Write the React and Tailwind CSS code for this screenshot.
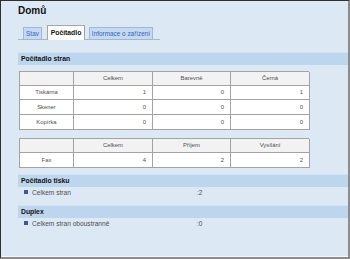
import { Fragment } from 'react';

const font = { fontFamily: '"Liberation Sans", Arial, sans-serif' };

const SectionBar = ({ title, className = '' }) => (
    <div className={`h-[13px] bg-[#bdd6ee] border-t border-[#d3e3f3] pl-[3px] flex items-center text-[6.8px] font-bold text-[#111] ${className}`}>
        {title}
    </div>
);

const Cell = ({ children, align = 'right', head = false, h }) => (
    <div
        className={`${h} border-r border-b border-[#a3a3a3] flex items-center text-[5.9px] text-[#505050] ${
            head ? 'bg-[#f2f2f2]' : 'bg-white'
        } ${align === 'center' ? 'justify-center' : 'justify-end pr-[6px]'}`}
    >
        {children}
    </div>
);

const CountTable = ({ heads, rows, className = '' }) => (
    <div className={`ml-[1px] w-[290px] border-l border-t border-[#a3a3a3] grid grid-cols-[54px_79px_78px_79px] ${className}`}>
        <Cell head align="center" h="h-[14px]" />
        {heads.map((t) => (
            <Cell key={t} head align="center" h="h-[14px]">{t}</Cell>
        ))}
        {rows.map((r, i) => (
            <Fragment key={r[0]}>
                <Cell align="center" h={i === 0 ? 'h-[14px]' : 'h-[15px]'}>{r[0]}</Cell>
                {r.slice(1).map((v, j) => (
                    <Cell key={j} h={i === 0 ? 'h-[14px]' : 'h-[15px]'}>{v}</Cell>
                ))}
            </Fragment>
        ))}
    </div>
);

const Item = ({ label, value }) => (
    <div className="h-[11px] flex items-center text-[6.6px] text-[#505050]">
        <div className="w-[179px] flex items-center pl-[6px]">
            <span className="w-[4px] h-[4px] bg-[#3d5a92] mr-[4px]" />
            {label}
        </div>
        <div>{value}</div>
    </div>
);

export default function App() {
    return (
        <div
            style={font}
            className="w-[350px] h-[259px] bg-[#dde8f5] border-t border-l border-[#2f2f2f] border-r-2 border-r-[#8c8c8c] border-b-2 border-b-[#8c8c8c] shadow-[inset_0_-1px_0_#f4f8fc] overflow-hidden flex flex-col pl-[17px] pt-[3px]"
        >
            <div className="h-[14px] leading-[14px] text-[10px] font-bold text-[#111]">Domů</div>

            <div className="mt-[8px] w-[142px] h-[14px] border-b border-[#a9b8c8] flex items-end pl-[5px]">
                <div className="w-[19px] h-[13px] -mb-px bg-[#c6d9f1] border border-[#9fb8d6] flex items-center justify-center text-[6.4px] text-[#3366bb]">
                    Stav
                </div>
                <div className="ml-[5px] w-[38px] h-[15px] -mb-px bg-white border border-b-0 border-[#a6a6a6] flex items-center justify-center text-[6.8px] font-bold text-[#111]">
                    Počítadlo
                </div>
                <div className="ml-[4px] w-[64px] h-[13px] -mb-px bg-[#c6d9f1] border border-[#9fb8d6] flex items-center justify-center text-[6.4px] text-[#3366bb]">
                    Informace o zařízení
                </div>
            </div>

            <SectionBar title="Počítadlo stran" className="mt-[12px]" />

            <CountTable
                className="mt-[6px]"
                heads={['Celkem', 'Barevně', 'Černá']}
                rows={[
                    ['Tiskárna', '1', '0', '1'],
                    ['Skener', '0', '0', '0'],
                    ['Kopírka', '0', '0', '0'],
                ]}
            />

            <div className="mt-[8px] ml-[1px] w-[290px] border-l border-t border-[#a3a3a3] grid grid-cols-[54px_79px_78px_79px]">
                <Cell head align="center" h="h-[14px]" />
                <Cell head align="center" h="h-[14px]">Celkem</Cell>
                <Cell head align="center" h="h-[14px]">Příjem</Cell>
                <Cell head align="center" h="h-[14px]">Vysílání</Cell>
                <Cell align="center" h="h-[15px]">Fax</Cell>
                <Cell h="h-[15px]">4</Cell>
                <Cell h="h-[15px]">2</Cell>
                <Cell h="h-[15px]">2</Cell>
            </div>

            <SectionBar title="Počítadlo tisku" className="mt-[6px]" />
            <Item label="Celkem stran" value=":2" />

            <SectionBar title="Duplex" className="mt-[7px]" />
            <Item label="Celkem stran oboustranně" value=":0" />
        </div>
    );
}
